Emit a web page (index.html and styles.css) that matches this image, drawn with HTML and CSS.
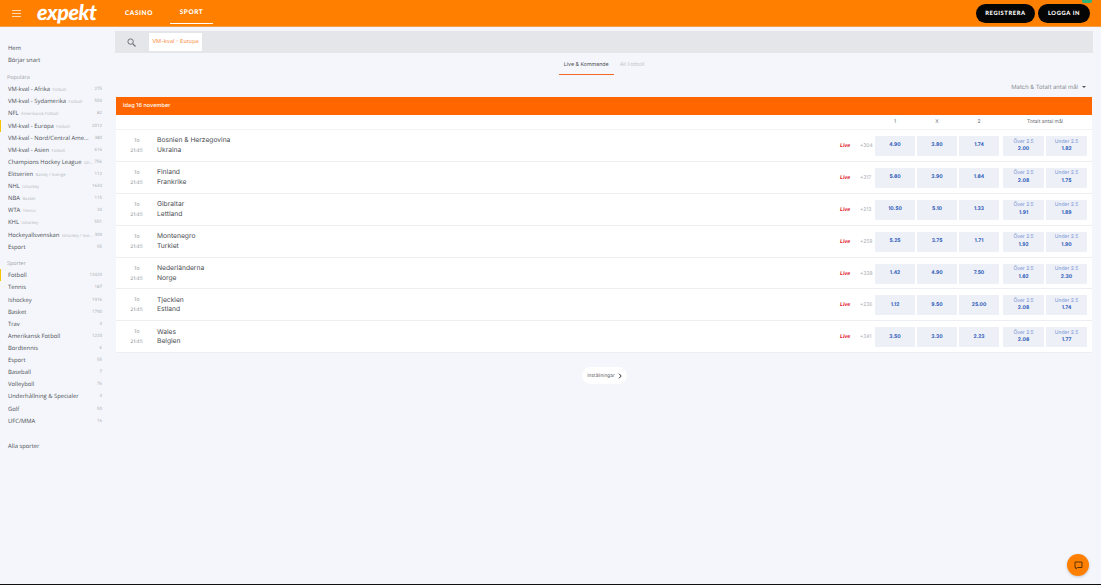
FILE: index.html
```html
<!DOCTYPE html>
<html lang="sv">
<head>
<meta charset="utf-8">
<title>Expekt Sport</title>
<link rel="stylesheet" href="styles.css">
</head>
<body>
<div class="page">
  <header class="topbar">
    <svg class="burger" width="9" height="7" viewBox="0 0 9 7"><path d="M0 .5h9M0 3.5h9M0 6.5h9" stroke="#ffd9ad" stroke-width="1"/></svg>
    <span class="logo">expekt</span>
    <nav class="topnav">
      <a class="topnav-item">CASINO</a>
      <a class="topnav-item active">SPORT</a>
    </nav>
    <div class="auth">
      <a class="auth-btn reg">REGISTRERA</a>
      <a class="auth-btn login">LOGGA IN</a>
      <span class="badge"></span>
    </div>
  </header>
  <div class="content">
    <aside class="side">
      <a class="side-row"><span class="name">Hem</span></a>
      <a class="side-row"><span class="name">Börjar snart</span></a>
      <div class="side-head first">Populära</div>
      <a class="side-row"><span class="name">VM-kval - Afrika <small>Fotboll</small></span><i>275</i></a>
      <a class="side-row"><span class="name">VM-kval - Sydamerika <small>Fotboll</small></span><i>550</i></a>
      <a class="side-row"><span class="name">NFL <small>Amerikansk Fotboll</small></span><i>82</i></a>
      <a class="side-row marked"><span class="name">VM-kval - Europa <small>Fotboll</small></span><i>2012</i></a>
      <a class="side-row"><span class="name">VM-kval - Nord/Central Ame...</span><i>380</i></a>
      <a class="side-row"><span class="name">VM-kval - Asien <small>Fotboll</small></span><i>616</i></a>
      <a class="side-row"><span class="name">Champions Hockey League <small>Ish...</small></span><i>756</i></a>
      <a class="side-row"><span class="name">Elitserien <small>Bandy / Sverige</small></span><i>112</i></a>
      <a class="side-row"><span class="name">NHL <small>Ishockey</small></span><i>1644</i></a>
      <a class="side-row"><span class="name">NBA <small>Basket</small></span><i>115</i></a>
      <a class="side-row"><span class="name">WTA <small>Tennis</small></span><i>34</i></a>
      <a class="side-row"><span class="name">KHL <small>Ishockey</small></span><i>551</i></a>
      <a class="side-row"><span class="name">Hockeyallsvenskan <small>Ishockey / Sve...</small></span><i>309</i></a>
      <a class="side-row"><span class="name">Esport</span><i>55</i></a>
      <div class="side-head">Sporter</div>
      <a class="side-row marked"><span class="name">Fotboll</span><i>13420</i></a>
      <a class="side-row"><span class="name">Tennis</span><i>187</i></a>
      <a class="side-row"><span class="name">Ishockey</span><i>1916</i></a>
      <a class="side-row"><span class="name">Basket</span><i>1790</i></a>
      <a class="side-row"><span class="name">Trav</span><i>4</i></a>
      <a class="side-row"><span class="name">Amerikansk Fotboll</span><i>1220</i></a>
      <a class="side-row"><span class="name">Bordtennis</span><i>6</i></a>
      <a class="side-row"><span class="name">Esport</span><i>55</i></a>
      <a class="side-row"><span class="name">Baseball</span><i>7</i></a>
      <a class="side-row"><span class="name">Volleyboll</span><i>76</i></a>
      <a class="side-row"><span class="name">Underhållning &amp; Specialer</span><i>4</i></a>
      <a class="side-row"><span class="name">Golf</span><i>50</i></a>
      <a class="side-row"><span class="name">UFC/MMA</span><i>16</i></a>
      <a class="side-row all"><span class="name">Alla sporter</span></a>
    </aside>
    <main class="main">
      <div class="search">
        <svg class="search-icon" width="9" height="9" viewBox="0 0 9 9"><circle cx="3.6" cy="3.6" r="2.7" fill="none" stroke="#6d7178" stroke-width="1"/><path d="M5.6 5.6 8.5 8.5" stroke="#6d7178" stroke-width="1.2"/></svg>
        <span class="chip">VM-kval - Europa</span>
      </div>
      <div class="tabs">
        <a class="tab active">Live &amp; Kommande</a>
        <a class="tab">All Fotboll</a>
      </div>
      <div class="market"><span>Match &amp; Totalt antal mål</span><b class="caret"></b></div>
      <div class="dateline">Idag 16 november</div>
      <div class="labels">
        <span class="odd-label">1</span><span class="odd-label">X</span><span class="odd-label">2</span>
        <span class="total-label">Totalt antal mål</span>
      </div>
      <section class="list">
        <article class="match">
          <div class="when">To<br>21:45</div>
          <div class="teams">Bosnien &amp; Herzegovina<br>Ukraina</div>
          <em class="live">Live</em><span class="more">+304</span>
          <div class="odds"><a class="odd">4.90</a><a class="odd">3.80</a><a class="odd">1.74</a></div>
          <div class="odds totals"><a class="odd"><span>Över 2.5</span>2.00</a><a class="odd"><span>Under 2.5</span>1.82</a></div>
        </article>
        <article class="match">
          <div class="when">To<br>21:45</div>
          <div class="teams">Finland<br>Frankrike</div>
          <em class="live">Live</em><span class="more">+317</span>
          <div class="odds"><a class="odd">5.60</a><a class="odd">3.90</a><a class="odd">1.64</a></div>
          <div class="odds totals"><a class="odd"><span>Över 2.5</span>2.08</a><a class="odd"><span>Under 2.5</span>1.75</a></div>
        </article>
        <article class="match">
          <div class="when">To<br>21:45</div>
          <div class="teams">Gibraltar<br>Lettland</div>
          <em class="live">Live</em><span class="more">+213</span>
          <div class="odds"><a class="odd">10.50</a><a class="odd">5.10</a><a class="odd">1.33</a></div>
          <div class="odds totals"><a class="odd"><span>Över 2.5</span>1.91</a><a class="odd"><span>Under 2.5</span>1.89</a></div>
        </article>
        <article class="match">
          <div class="when">To<br>21:45</div>
          <div class="teams">Montenegro<br>Turkiet</div>
          <em class="live">Live</em><span class="more">+259</span>
          <div class="odds"><a class="odd">5.25</a><a class="odd">3.75</a><a class="odd">1.71</a></div>
          <div class="odds totals"><a class="odd"><span>Över 2.5</span>1.92</a><a class="odd"><span>Under 2.5</span>1.90</a></div>
        </article>
        <article class="match">
          <div class="when">To<br>21:45</div>
          <div class="teams">Nederländerna<br>Norge</div>
          <em class="live">Live</em><span class="more">+338</span>
          <div class="odds"><a class="odd">1.42</a><a class="odd">4.90</a><a class="odd">7.50</a></div>
          <div class="odds totals"><a class="odd"><span>Över 2.5</span>1.62</a><a class="odd"><span>Under 2.5</span>2.30</a></div>
        </article>
        <article class="match">
          <div class="when">To<br>21:45</div>
          <div class="teams">Tjeckien<br>Estland</div>
          <em class="live">Live</em><span class="more">+236</span>
          <div class="odds"><a class="odd">1.12</a><a class="odd">9.50</a><a class="odd">25.00</a></div>
          <div class="odds totals"><a class="odd"><span>Över 2.5</span>2.08</a><a class="odd"><span>Under 2.5</span>1.74</a></div>
        </article>
        <article class="match">
          <div class="when">To<br>21:45</div>
          <div class="teams">Wales<br>Belgien</div>
          <em class="live">Live</em><span class="more">+341</span>
          <div class="odds"><a class="odd">3.50</a><a class="odd">3.30</a><a class="odd">2.23</a></div>
          <div class="odds totals"><a class="odd"><span>Över 2.5</span>2.06</a><a class="odd"><span>Under 2.5</span>1.77</a></div>
        </article>
      </section>
      <div class="settings-wrap">
        <a class="settings">Inställningar <svg width="4" height="6" viewBox="0 0 4 6"><path d="M1 .7 3.2 3 1 5.3" fill="none" stroke="#333" stroke-width="1"/></svg></a>
      </div>
    </main>
  </div>
  <a class="chat"><svg width="9" height="9" viewBox="0 0 9 9"><path d="M1 1h7v5.5H3.5L2 8V6.5H1z" fill="none" stroke="#5c3200" stroke-width="1"/></svg></a>
</div>
</body>
</html>
```

FILE: styles.css
```css
* { box-sizing: border-box; }
html, body { margin: 0; height: 100%; }
body { background: #f4f6fb; font-family: Inter, "Liberation Sans", sans-serif; color: #3a3d42; overflow: hidden; text-rendering: geometricPrecision; }
.page { position: relative; width: 1101px; height: 585px; overflow: hidden; display: flex; flex-direction: column; border-bottom: 1px solid #111; }

.topbar { flex: none; height: 27px; background: #ff7f00; display: flex; align-items: center; padding-left: 12px; border-bottom: 1px solid #f0a050; }
.burger { flex: none; }
.logo { margin-left: 16px; width: 60px; font-family: Lato, sans-serif; font-style: italic; font-weight: 900; font-size: 21.5px; letter-spacing: -.5px; color: #fff; line-height: 24px; padding-bottom: 3px; }
.topnav { display: flex; margin-left: 28px; height: 100%; }
.topnav-item { font-family: Lato, sans-serif; font-weight: 900; font-size: 6.4px; letter-spacing: .6px; color: #fff; display: flex; align-items: center; justify-content: center; padding-top: 2px; height: 24px; }
.topnav-item:first-child { width: 28px; margin-right: 17px; }
.topnav-item.active { width: 43px; border-bottom: 1px solid #fff; }
.auth { position: relative; margin-left: auto; margin-right: 11px; display: flex; gap: 3px; padding-top: 1px; }
.auth-btn { height: 19px; border-radius: 10px; background: #050505; color: #fff; font-family: Lato, sans-serif; font-weight: 900; font-size: 5.8px; letter-spacing: .6px; display: flex; align-items: center; justify-content: center; }
.reg { width: 59px; }
.login { width: 52px; }
.badge { position: absolute; right: -2px; top: -4px; width: 10px; height: 4px; background: #2fb37a; border-radius: 0 0 2px 2px; }

.content { flex: 1; display: flex; min-height: 0; }
.side { flex: none; width: 116px; padding-top: 15px; }
.side-row { display: flex; justify-content: space-between; align-items: center; height: 12.12px; padding: 0 14px 0 8px; font-size: 5.85px; color: #4b4e53; white-space: nowrap; font-family: "Open Sans", sans-serif; }
.side-row i { font-style: normal; font-size: 4.4px; color: #a9acb2; }
.side-row small { font-size: 4.2px; color: #b4b7bc; margin-left: 1px; }
.side-row.marked { box-shadow: inset 1px 0 0 #f7c600; }
.side-head { font-family: "Open Sans", sans-serif; font-size: 5.4px; color: #a0a3a9; padding-left: 7px; height: 12px; line-height: 12px; margin-top: 4.5px; }
.side-head.first { margin-top: 5px; }
.all { margin-top: 13px; }

.main { flex: none; width: 976px; padding-top: 4px; }
.search { height: 22px; width: 978px; margin-left: -1px; background: #e4e6ea; display: flex; align-items: center; padding-left: 12px; }
.search-icon { flex: none; }
.chip { margin-left: 13px; width: 53px; height: 18px; background: #fff; color: #fb8f4c; font-size: 5.6px; display: flex; align-items: center; justify-content: center; }
.tabs { display: flex; justify-content: center; gap: 1px; height: 20px; margin-top: 2px; }
.tab { font-size: 5.3px; color: #c1c3c8; padding: 1px 5px 0; display: flex; align-items: center; border-bottom: 1px solid transparent; height: 20px; }
.tab.active { color: #4a4d52; border-bottom: 1px solid #f26a21; }
.market { display: flex; justify-content: flex-end; align-items: center; gap: 4px; height: 16px; padding-right: 6px; margin-top: 4px; font-size: 5.9px; color: #8b8e94; }
.caret { width: 0; height: 0; border-left: 2px solid transparent; border-right: 2px solid transparent; border-top: 2px solid #555; }
.dateline { margin-top: 2px; height: 18px; background: #ff6600; color: #fff; font-size: 5.6px; font-weight: 500; display: flex; align-items: center; padding-left: 7px; }
.labels { height: 15px; background: #fff; display: flex; align-items: center; padding-left: 758px; font-size: 5px; color: #66696e; border-bottom: 1px solid #f1f2f6; }
.odd-label { width: 42px; text-align: center; }
.total-label { width: 84px; margin-left: 3px; text-align: center; }
.match { height: 31.9px; background: #fff; display: flex; align-items: center; padding-top: 1px; border-bottom: 1px solid #eceef2; }
.when { width: 41px; text-align: center; font-size: 4.9px; line-height: 10px; color: #868a91; }
.teams { flex: 1; font-size: 6.7px; line-height: 9.6px; color: #494c51; }
.live { width: 20px; font-size: 5.2px; font-weight: 700; color: #e2202c; }
.more { width: 15px; font-size: 5px; color: #a9acb1; }
.odds { display: flex; gap: 2px; margin-right: 4px; }
.odd { width: 40px; height: 20px; background: #eef0f7; color: #2a5ab8; font-size: 5px; font-weight: 700; display: flex; flex-direction: column; align-items: center; justify-content: center; line-height: 7.4px; }
.odd span { font-weight: 400; color: #6f8fd3; font-size: 5px; }
.totals { gap: 2px; margin-right: 5px; }
.totals .odd { width: 41px; }
.settings-wrap { display: flex; justify-content: center; margin-top: 14px; padding-left: 1px; }
.settings { height: 17px; width: 45px; background: #fff; border-radius: 9px; font-size: 4.8px; color: #5e6166; display: flex; align-items: center; justify-content: center; gap: 3px; }
.chat { position: absolute; right: 12px; bottom: 8px; width: 22px; height: 22px; border-radius: 50%; background: #ff8000; display: flex; align-items: center; justify-content: center; box-shadow: 0 1px 3px rgba(0,0,0,.2); }
```
